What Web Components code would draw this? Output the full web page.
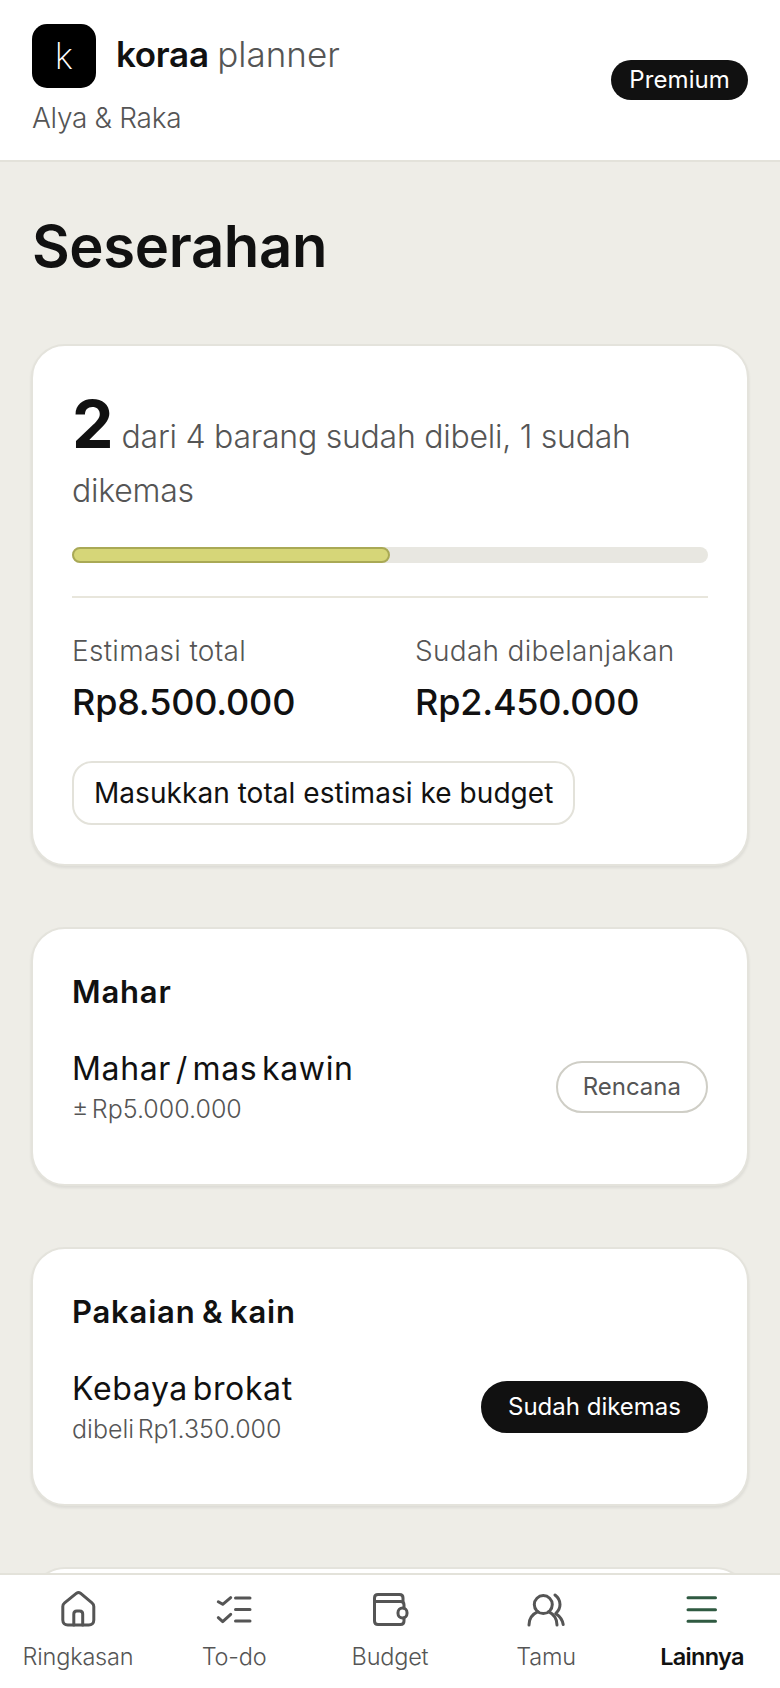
<!doctype html>
<html lang="id">
<head>
<meta charset="utf-8">
<title>Seserahan</title>
<style>
  html, body { margin: 0; height: 100%; }
  body { font-family: Inter, "Liberation Sans", sans-serif; color: #111; background: #eeede7; }
  koraa-app { height: 1688px; }
</style>
</head>
<body>

<koraa-app>
  <koraa-header slot="header"></koraa-header>
  <page-title>Seserahan</page-title>

  <summary-card bought="2" note="dari 4 barang sudah dibeli, 1 sudah" note-end="dikemas" percent="50"
    estimate="Rp8.500.000" spent="Rp2.450.000" action="Masukkan total estimasi ke budget"></summary-card>

  <item-card heading="Mahar">
    <item-row name="Mahar / mas kawin" sub="± Rp5.000.000" status="Rencana"></item-row>
  </item-card>

  <item-card heading="Pakaian &amp; kain">
    <item-row name="Kebaya brokat" sub="dibeli Rp1.350.000" status="Sudah dikemas" done></item-row>
  </item-card>

  <item-card></item-card>

  <bottom-nav slot="nav">
    <nav-tab label="Ringkasan"><svg viewBox="0 0 48 48" fill="none" stroke="currentColor" stroke-width="3" stroke-linejoin="round" stroke-linecap="round"><path d="M22.6 7.2 10.6 16.8c-1.2 1-1.8 2.2-1.8 3.6V34c0 3 2 5 5 5h21c3 0 5-2 5-5V20.4c0-1.4-.6-2.6-1.8-3.6L26.4 7.2c-1.2-.9-2.6-.9-3.8 0Z"/><path d="M19.8 39V28c0-1.8 1.2-3 3-3h2.900c1.800 0 3 1.200 3 3v11"/></svg></nav-tab>
    <nav-tab label="To-do"><svg viewBox="0 0 48 48" fill="none" stroke="currentColor" stroke-width="3" stroke-linejoin="round" stroke-linecap="round"><path d="m8.3 15.7 4.4 2.600 8-6.600M8.300 31.700l4.400 4 8-7.400"/><path d="M25.500 12H40M25.500 23.500H40M25.500 35H40"/></svg></nav-tab>
    <nav-tab label="Budget"><svg viewBox="0 0 48 48" fill="none" stroke="currentColor" stroke-width="3" stroke-linejoin="round" stroke-linecap="round"><path d="M8.500 15.500V12c0-2.400 1.100-3.500 3.500-3.500h21.500c2.400 0 3.500 1.100 3.500 3.500v3.500"/><path d="M8.500 15.500h26c2.200 0 3.500 1.300 3.500 3.500v3M8.500 15.500V35c0 2.400 1.100 3.500 3.500 3.500h22.500c2.400 0 3.500-1.100 3.500-3.500v-3"/><rect x="32" y="22" width="9" height="10" rx="4.500"/></svg></nav-tab>
    <nav-tab label="Tamu"><svg viewBox="0 0 48 48" fill="none" stroke="currentColor" stroke-width="3" stroke-linecap="round" stroke-linejoin="round"><circle cx="21.300" cy="18.600" r="9"/><path d="M7 39c0-6.500 3.800-11 9-13.300M26.600 25.700C31.200 28 35 32.500 35 39"/><path d="M33 9c3 2.200 5 5.500 5 9.500 0 3.500-1.800 6.700-4.300 9 4 2.700 6.800 6.400 7.500 11"/></svg></nav-tab>
    <nav-tab label="Lainnya" active><svg viewBox="0 0 48 48" fill="none" stroke="currentColor" stroke-width="3" stroke-linecap="round"><path d="M10 11.700h27.500M10 23.700h27.500M10 35.300h27.500"/></svg></nav-tab>
  </bottom-nav>
</koraa-app>

<script>
const app = document.createElement('template');
app.innerHTML = `
  <style>
    :host { display: flex; flex-direction: column; background: #eeede7; overflow: hidden; }
    main { flex: 1; min-height: 0; overflow: hidden; padding: 0 31px; display: flex; flex-direction: column; gap: 61px; }
  </style>
  <slot name="header"></slot>
  <main><slot></slot></main>
  <slot name="nav"></slot>
`;

class KoraaApp extends HTMLElement {
  constructor() {
    super();
    this.attachShadow({ mode: 'open' }).appendChild(app.content.cloneNode(true));
  }
}

const header = document.createElement('template');
header.innerHTML = `
  <style>
    :host { display: flex; flex: none; justify-content: space-between; align-items: flex-start; height: 162px; box-sizing: border-box; padding: 24px 32px 0; background: #fff; border-bottom: 2px solid #e3e2da; }
    .brand { display: flex; align-items: center; gap: 20px; }
    .logo { width: 64px; height: 64px; border-radius: 15px; background: #000; color: #fff; display: flex; align-items: center; justify-content: center; font-size: 36px; font-weight: 250; }
    .name { font-size: 35px; font-weight: 600; letter-spacing: -.3px; color: #111; margin-top: -4px; }
    .name span { font-weight: 300; color: #555; letter-spacing: 0; }
    .couple { font-size: 28px; font-weight: 300; color: #555; margin-top: 12px; letter-spacing: -.3px; line-height: 36px; }
    .plan { margin-top: 36px; height: 40px; line-height: 40px; padding: 0 18px; border-radius: 20px; background: #111; color: #fff; font-size: 24px; letter-spacing: .1px; }
  </style>
  <div>
    <div class="brand"><div class="logo">k</div><div class="name">koraa <span>planner</span></div></div>
    <div class="couple">Alya &amp; Raka</div>
  </div>
  <div class="plan">Premium</div>
`;

class KoraaHeader extends HTMLElement {
  constructor() {
    super();
    this.attachShadow({ mode: 'open' }).appendChild(header.content.cloneNode(true));
  }
}

const title = document.createElement('template');
title.innerHTML = `
  <style>
    :host { display: block; flex: none; margin: 50px 0 3px 1px; font-size: 58px; line-height: 68px; font-weight: 600; letter-spacing: -.35px; color: #111; }
  </style>
  <slot></slot>
`;

class PageTitle extends HTMLElement {
  constructor() {
    super();
    this.attachShadow({ mode: 'open' }).appendChild(title.content.cloneNode(true));
  }
}

const cardStyle = `
  :host { display: block; flex: none; box-sizing: border-box; background: #fff; border: 2px solid #e4e3dc; border-radius: 34px; padding: 39px; box-shadow: 0 2px 3px rgba(0,0,0,.08); }
`;

const summary = document.createElement('template');
summary.innerHTML = `
  <style>
    ${cardStyle}
    .lead { margin-top: 12px; font-size: 32px; line-height: 54px; font-weight: 300; color: #555; letter-spacing: -.25px; }
    .lead b { font-size: 66px; font-weight: 700; color: #111; letter-spacing: 0; margin-right: 8px; }
    .bar { height: 16px; border-radius: 8px; background: #e8e7e1; margin-top: 29px; }
    .fill { height: 100%; box-sizing: border-box; border-radius: 8px; background: #d6d678; border: 2px solid #a9a955; }
    hr { height: 2px; border: 0; background: #e8e6dc; margin: 33px 0 0; }
    .totals { display: grid; grid-template-columns: 343px 1fr; margin-top: 33px; }
    .label { font-size: 28px; line-height: 40px; font-weight: 300; color: #555; letter-spacing: .3px; }
    .value { font-size: 36px; line-height: 48px; font-weight: 500; color: #111; margin-top: 7px; letter-spacing: -.2px; }
    button { display: block; margin-top: 35px; height: 64px; padding: 0 20px; background: #fff; border: 2px solid #e3e2da; border-radius: 20px; font: 400 28px Inter, sans-serif; color: #111; letter-spacing: .05px; }
  </style>
  <div class="lead">
    <div><b id="bought"></b><span id="note"></span></div>
    <div id="noteEnd"></div>
  </div>
  <div class="bar"><div class="fill" id="fill"></div></div>
  <hr>
  <div class="totals">
    <div><div class="label">Estimasi total</div><div class="value" id="estimate"></div></div>
    <div><div class="label">Sudah dibelanjakan</div><div class="value" id="spent"></div></div>
  </div>
  <button id="action"></button>
`;

class SummaryCard extends HTMLElement {
  constructor() {
    super();
    this._shadowRoot = this.attachShadow({ mode: 'open' });
    this._shadowRoot.appendChild(summary.content.cloneNode(true));
  }

  connectedCallback() {
    const $ = (id) => this._shadowRoot.querySelector('#' + id);
    $('bought').textContent = this.getAttribute('bought');
    $('note').textContent = this.getAttribute('note');
    $('noteEnd').textContent = this.getAttribute('note-end');
    $('estimate').textContent = this.getAttribute('estimate');
    $('spent').textContent = this.getAttribute('spent');
    $('action').textContent = this.getAttribute('action');
    $('fill').style.width = this.getAttribute('percent') + '%';
  }
}

const itemCard = document.createElement('template');
itemCard.innerHTML = `
  <style>
    ${cardStyle}
    :host { height: 259px; }
    h2 { margin: 4px 0 36px; font-size: 31px; line-height: 40px; font-weight: 600; color: #111; letter-spacing: .8px; word-spacing: -2px; }
  </style>
  <h2 id="heading"></h2>
  <slot></slot>
`;

class ItemCard extends HTMLElement {
  constructor() {
    super();
    this._shadowRoot = this.attachShadow({ mode: 'open' });
    this._shadowRoot.appendChild(itemCard.content.cloneNode(true));
  }

  connectedCallback() {
    this._shadowRoot.querySelector('#heading').textContent = this.getAttribute('heading');
  }
}

const itemRow = document.createElement('template');
itemRow.innerHTML = `
  <style>
    :host { display: flex; justify-content: space-between; align-items: center; }
    .name { font-size: 32px; line-height: 42px; font-weight: 400; color: #111; letter-spacing: .65px; word-spacing: -5px; }
    .sub { font-size: 25px; line-height: 32px; font-weight: 300; color: #555; margin-top: 3px; letter-spacing: 0; word-spacing: -3.5px; }
    .status { height: 52px; line-height: 48px; box-sizing: border-box; padding: 0 25px; border-radius: 26px; border: 2px solid #cfcec6; color: #555; font-size: 24px; }
    :host([done]) .status { background: #111; border-color: #111; color: #fff; }
  </style>
  <div><div class="name" id="name"></div><div class="sub" id="sub"></div></div>
  <div class="status" id="status"></div>
`;

class ItemRow extends HTMLElement {
  constructor() {
    super();
    this._shadowRoot = this.attachShadow({ mode: 'open' });
    this._shadowRoot.appendChild(itemRow.content.cloneNode(true));
  }

  connectedCallback() {
    for (const key of ['name', 'sub', 'status']) {
      this._shadowRoot.querySelector('#' + key).textContent = this.getAttribute(key);
    }
  }
}

const nav = document.createElement('template');
nav.innerHTML = `
  <style>
    :host { display: grid; flex: none; grid-template-columns: repeat(5, 1fr); height: 115px; box-sizing: border-box; background: #fff; border-top: 2px solid #e3e2da; }
  </style>
  <slot></slot>
`;

class BottomNav extends HTMLElement {
  constructor() {
    super();
    this.attachShadow({ mode: 'open' }).appendChild(nav.content.cloneNode(true));
  }
}

const tab = document.createElement('template');
tab.innerHTML = `
  <style>
    :host { display: flex; flex-direction: column; align-items: center; padding-top: 11px; color: #555; font-size: 23.5px; font-weight: 300; }
    ::slotted(svg) { width: 48px; height: 48px; display: block; }
    .icon { height: 48px; color: #555; }
    .text { margin-top: 8px; line-height: 30px; letter-spacing: -.2px; }
    :host([active]) .icon { color: #2f5a41; }
    :host([active]) .text { color: #111; font-weight: 600; letter-spacing: -.7px; }
  </style>
  <div class="icon"><slot></slot></div>
  <div class="text" id="label"></div>
`;

class NavTab extends HTMLElement {
  constructor() {
    super();
    this._shadowRoot = this.attachShadow({ mode: 'open' });
    this._shadowRoot.appendChild(tab.content.cloneNode(true));
  }

  connectedCallback() {
    this._shadowRoot.querySelector('#label').textContent = this.getAttribute('label');
  }
}

customElements.define('koraa-app', KoraaApp);
customElements.define('koraa-header', KoraaHeader);
customElements.define('page-title', PageTitle);
customElements.define('summary-card', SummaryCard);
customElements.define('item-card', ItemCard);
customElements.define('item-row', ItemRow);
customElements.define('bottom-nav', BottomNav);
customElements.define('nav-tab', NavTab);
</script>
</body>
</html>
